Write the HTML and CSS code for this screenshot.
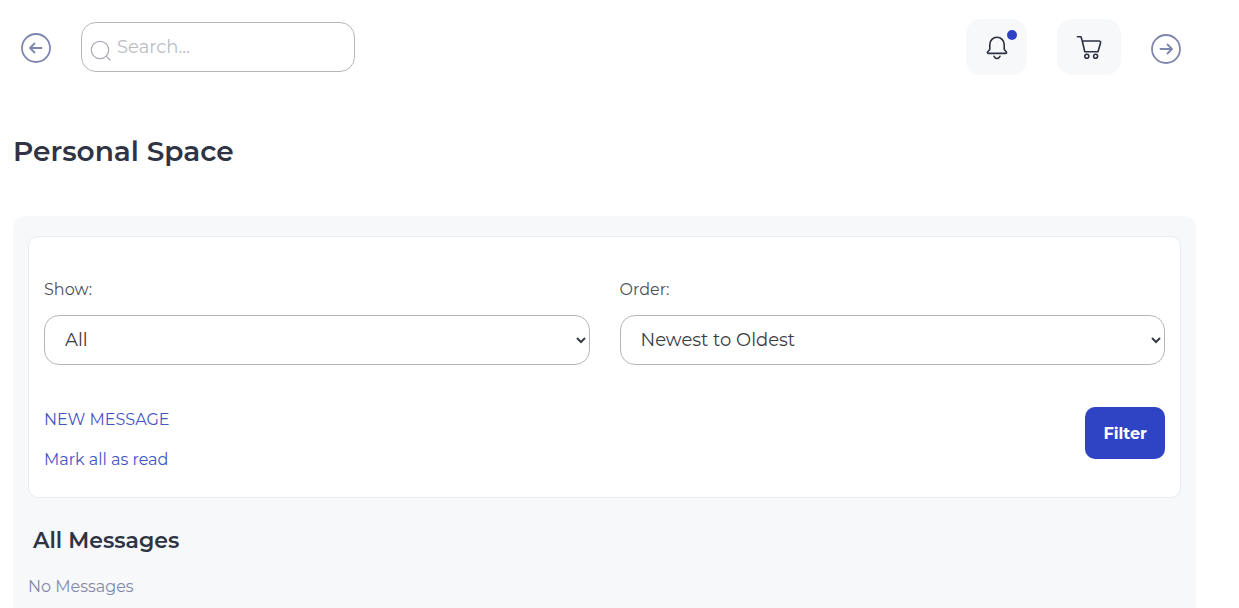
FILE: index.html
```html
<!DOCTYPE html>
<html lang="en">
<head>
<meta charset="utf-8">
<meta name="viewport" content="width=device-width, initial-scale=1">
<title>Personal Space</title>
<link rel="stylesheet" href="styles.css">
</head>
<body>
<header class="topbar">
  <button class="nav-button nav-back" type="button" aria-label="Back">
    <svg class="nav-icon" viewBox="0 0 30 30"><circle cx="15" cy="15" r="14"/><path d="M20.500 15H9.500M13.500 10.500L9 15l4.500 4.500"/></svg>
  </button>
  <form class="search" role="search">
    <svg class="search-icon" viewBox="0 0 22 22"><circle cx="10" cy="10" r="8.700"/><path d="M16.200 16.200l4.300 4.300"/></svg>
    <input class="search-input" type="search" placeholder="Search..." aria-label="Search">
  </form>
  <div class="actions">
    <button class="tile tile-bell" type="button" aria-label="Notifications">
      <svg class="tile-icon" viewBox="0 0 26 26"><path d="M5.800 15v-4.500a7.200 7.200 0 0 1 14.400 0V15c0 1.600 2.400 1.900 2.400 3.400 0 .6-.4 1-1 1H4.400c-.6 0-1-.4-1-1 0-1.500 2.400-1.800 2.400-3.400zM10 22.300c.6 1.500 1.700 2.200 3 2.200s2.400-.7 3-2.200"/></svg>
      <span class="dot"></span>
    </button>
    <button class="tile" type="button" aria-label="Cart">
      <svg class="tile-icon" viewBox="0 0 26 26"><path d="M1.500 2.700H5l1.200 4 2.600 11h13.200L24.500 9c.3-1.200-.3-2-1.500-2H6.400"/><circle cx="10.800" cy="22.200" r="2"/><circle cx="19.600" cy="22.200" r="2"/></svg>
    </button>
    <button class="nav-button nav-next" type="button" aria-label="Forward">
      <svg class="nav-icon" viewBox="0 0 30 30"><circle cx="15" cy="15" r="14"/><path d="M9.500 15h11M16.500 10.500L21 15l-4.500 4.500"/></svg>
    </button>
  </div>
</header>
<main class="content">
  <h1 class="page-title">Personal Space</h1>
  <section class="panel">
    <form class="filters">
      <div class="fields">
        <div class="field">
          <label class="field-label" for="show">Show:</label>
          <select class="field-select" id="show"><option>All</option></select>
        </div>
        <div class="field">
          <label class="field-label" for="order">Order:</label>
          <select class="field-select" id="order"><option>Newest to Oldest</option></select>
        </div>
      </div>
      <div class="filter-footer">
        <div class="links">
          <a class="link" href="#">NEW MESSAGE</a>
          <a class="link" href="#">Mark all as read</a>
        </div>
        <button class="filter-button" type="button">Filter</button>
      </div>
    </form>
    <h2 class="section-title">All Messages</h2>
    <p class="empty">No Messages</p>
  </section>
</main>
</body>
</html>
```
FILE: styles.css
```css
* { box-sizing: border-box; }
html { overflow: hidden; }
body {
  margin: 0;
  min-height: 100vh;
  display: flex;
  flex-direction: column;
  background: #fff;
  color: #2f3444;
  font-family: Montserrat, Inter, "Liberation Sans", sans-serif;
  font-size: 16px;
  line-height: 24px;
}
button, input, select { font-family: inherit; }
.topbar {
  display: flex;
  align-items: center;
  padding: 19px 58px 0 21px;
}
.nav-button {
  display: flex;
  padding: 0;
  border: 0;
  background: none;
}
.nav-back { padding-top: 2px; }
.nav-next { padding-top: 4px; }
.nav-icon {
  width: 30px;
  height: 30px;
  fill: none;
  stroke: #7f86ae;
  stroke-width: 1.8;
  stroke-linecap: round;
  stroke-linejoin: round;
}
.search {
  display: flex;
  align-items: center;
  gap: 5px;
  width: 274px;
  height: 50px;
  margin-left: 30px;
  padding: 0 8px;
  border: 1px solid #b5b7bc;
  border-radius: 15px;
}
.search-icon {
  flex: none;
  width: 22px;
  height: 22px;
  margin-top: 8px;
  fill: none;
  stroke: #a9abb3;
  stroke-width: 1.2;
}
.search-input {
  flex: 1;
  min-width: 0;
  padding: 0;
  border: 0;
  outline: 0;
  background: none;
  font-size: 18px;
}
.search-input::placeholder { color: #bbbdc2; }
.actions {
  display: flex;
  align-items: center;
  gap: 30px;
  margin-left: auto;
}
.tile {
  position: relative;
  display: flex;
  align-items: center;
  justify-content: center;
  width: 64px;
  height: 56px;
  padding: 0;
  border: 0;
  border-radius: 15px;
  background: #f7f8fa;
}
.tile-bell { width: 61px; }
.tile-icon {
  width: 26px;
  height: 26px;
  fill: none;
  stroke: #2b3040;
  stroke-width: 1.6;
  stroke-linecap: round;
  stroke-linejoin: round;
}
.dot {
  position: absolute;
  top: 11px;
  right: 10px;
  width: 10px;
  height: 10px;
  border-radius: 50%;
  background: #2f44c4;
}
.content {
  flex: 1;
  display: flex;
  flex-direction: column;
  padding: 56px 43px 0 13px;
}
.page-title {
  margin: 0 0 45px;
  font-size: 28px;
  font-weight: 600;
  line-height: 40px;
}
.panel {
  flex: 1;
  padding: 20px 15px 0;
  border-radius: 12px 12px 0 0;
  background: #f7f8fa;
}
.filters {
  padding: 41px 15px 25px;
  border: 1px solid #e9ebef;
  border-radius: 10px;
  background: #fff;
}
.fields {
  display: grid;
  grid-template-columns: 1fr 1fr;
  gap: 30px;
}
.field {
  display: flex;
  flex-direction: column;
  gap: 13px;
}
.field-label { color: #4c4f59; }
.field-select {
  width: 100%;
  height: 50px;
  padding: 0 0 0 16px;
  border: 1px solid #b3b5ba;
  border-radius: 15px;
  background: #fff;
  color: #3a3c44;
  font-size: 18px;
}
.filter-footer {
  display: flex;
  align-items: flex-start;
  justify-content: space-between;
  margin-top: 42px;
}
.links {
  display: flex;
  flex-direction: column;
  gap: 16px;
  padding-top: 1px;
}
.link {
  color: #4454c9;
  text-decoration: none;
}
.filter-button {
  height: 52px;
  padding: 0 18px;
  border: 0;
  border-radius: 10px;
  background: #2f44c4;
  color: #fff;
  font-size: 16px;
  font-weight: 700;
}
.section-title {
  margin: 28px 5px 0;
  font-size: 22px;
  font-weight: 600;
  line-height: 30px;
}
.empty {
  margin: 19px 0 0;
  color: #8489ad;
}
```
